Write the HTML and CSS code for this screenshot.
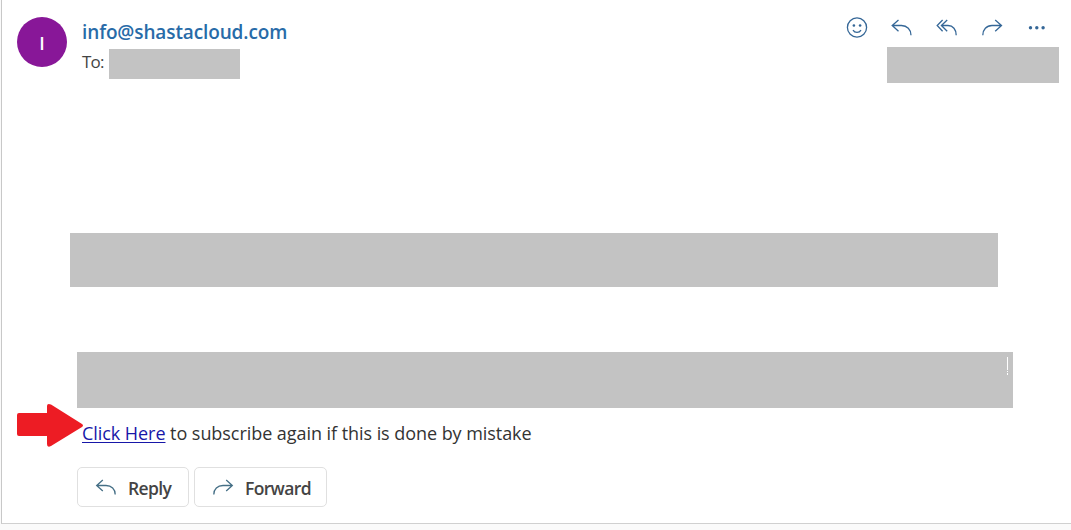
FILE: index.html
```html
<!DOCTYPE html>
<html lang="en">
<head>
  <meta charset="UTF-8" />
  <meta name="viewport" content="width=device-width, initial-scale=1" />
  <title>Mail</title>
  <link rel="stylesheet" href="styles.css">
</head>
<body>

<div class="message">
  <!-- Sender and actions -->
  <header class="header">
    <div class="avatar">I</div>
    <div class="sender">
      <div class="from">info@shastacloud.com</div>
      <div class="to"><span>To:</span><div class="redacted recipient"></div></div>
    </div>
    <div class="side">
      <div class="actions">
        <svg width="22" height="22" viewBox="0 0 22 22">
          <circle cx="11" cy="10.500" r="9.600" />
          <circle class="dot" cx="7.900" cy="8.500" r="1.300" />
          <circle class="dot" cx="14.100" cy="8.500" r="1.300" />
          <path d="M7 13.200C8.800 16.200 13.200 16.200 15 13.200" />
        </svg>
        <svg width="22" height="22" viewBox="0 0 22 22">
          <path d="M7.500 3L1.200 8.500L7.500 14.300M1.200 8.500H10.500C16 8.500 20 12.500 20 18.200" />
        </svg>
        <svg width="22" height="22" viewBox="0 0 22 22">
          <path d="M6.600 3L1.200 8.500L6.600 14.300M11.200 3L5.400 8.500L11.200 14.300M5.400 8.500H12C17 8.500 20.200 12.500 20.200 18.200" />
        </svg>
        <svg width="22" height="22" viewBox="0 0 22 22">
          <path d="M14.200 3L20.500 8.500L14.200 14.300M20.500 8.500H11C5.500 8.500 1.800 12.500 1.800 18.200" />
        </svg>
        <svg width="22" height="22" viewBox="0 0 22 22">
          <circle class="dot" cx="4.500" cy="10.800" r="1.700" />
          <circle class="dot" cx="10.800" cy="10.800" r="1.700" />
          <circle class="dot" cx="17.100" cy="10.800" r="1.700" />
        </svg>
      </div>
      <div class="redacted date"></div>
    </div>
  </header>

  <!-- Body -->
  <div class="redacted intro"></div>
  <div class="redacted details"><span class="caret"></span></div>

  <div class="subscribe">
    <svg class="pointer" width="68" height="46" viewBox="0 0 68 46">
      <path d="M3 10H31V3Q31 0 35 1.500L66 21Q68 22.500 66 24L35 43Q31 45 31 41V33H3Q1 33 1 31V12Q1 10 3 10Z" />
    </svg>
    <p><a href="#">Click Here</a> to subscribe again if this is done by mistake</p>
  </div>

  <!-- Reply buttons -->
  <div class="buttons">
    <button class="reply">
      <svg width="22" height="22" viewBox="0 0 22 22">
        <path d="M7.800 4L1.700 9.500L7.800 15M1.700 9.500H11C16.500 9.500 20.200 13 20.200 18.400" />
      </svg>
      <span>Reply</span>
    </button>
    <button class="forward">
      <svg width="22" height="22" viewBox="0 0 22 22">
        <path d="M14.200 4L20.300 9.500L14.200 15M20.300 9.500H11C5.500 9.500 1.800 13 1.800 18.400" />
      </svg>
      <span>Forward</span>
    </button>
  </div>
</div>

</body>
</html>
```
FILE: styles.css
```css
* {
  box-sizing: border-box;
}
body {
  margin: 0;
  background: #fafafa;
  font-family: "Open Sans", "Noto Sans", sans-serif;
  color: #333;
}
.message {
  height: 524px;
  margin-left: 1px;
  background: #fff;
  border-left: 1px solid #c8c8c8;
  border-bottom: 1px solid #d0d0d0;
}
.header {
  display: flex;
  height: 83px;
  padding: 17px 12px 0 15px;
}
.avatar {
  width: 50px;
  height: 50px;
  border-radius: 50%;
  background: #881798;
  color: #fff;
  font-size: 18px;
  font-weight: 600;
  line-height: 52px;
  text-align: center;
}
.sender {
  margin-left: 15px;
}
.from {
  height: 32px;
  font-size: 19px;
  font-weight: 600;
  line-height: 30px;
  letter-spacing: -0.12px;
  color: #286ba8;
}
.to {
  display: flex;
  height: 30px;
  font-size: 17px;
  line-height: 26px;
  letter-spacing: -0.8px;
  color: #444;
}
.to span {
  width: 27px;
}
.redacted {
  background: #c3c3c3;
}
.recipient {
  width: 131px;
  height: 30px;
}
.side {
  width: 213px;
  margin-left: auto;
}
.actions {
  display: flex;
  gap: 23px;
  height: 30px;
}
svg {
  display: block;
  fill: none;
  stroke: #356797;
  stroke-width: 1.3;
}
svg .dot {
  fill: #356797;
  stroke: none;
}
.date {
  width: 172px;
  height: 36px;
  margin-left: 41px;
}
.intro {
  width: 928px;
  height: 54px;
  margin: 150px 0 0 68px;
}
.details {
  width: 936px;
  height: 56px;
  margin: 65px 0 0 75px;
  padding: 5px 5px 0 0;
}
.caret {
  display: block;
  width: 1px;
  height: 18px;
  margin-left: auto;
  background: linear-gradient(#fff 13px, #c3c3c3 13px 14px, #fff 14px 15px, #c3c3c3 15px 16px, #fff 16px);
}
.subscribe {
  position: relative;
  height: 59px;
  padding: 12px 0 0 80px;
}
.pointer {
  position: absolute;
  left: 14px;
  top: -5px;
  fill: #ed1c24;
  stroke: none;
}
.subscribe p {
  margin: 0;
  font-size: 18px;
  line-height: 26px;
  letter-spacing: -0.055px;
  white-space: nowrap;
}
.subscribe a {
  color: #1717a8;
  text-decoration-thickness: 1px;
  text-underline-offset: 2px;
}
.buttons {
  display: flex;
  gap: 5px;
  padding-left: 75px;
}
.buttons button {
  display: flex;
  align-items: center;
  gap: 11px;
  height: 40px;
  padding: 0 0 0 17px;
  background: #fff;
  border: 1px solid #e0e0e0;
  border-radius: 5px;
  font: 600 17.5px "Open Sans", "Noto Sans", sans-serif;
  letter-spacing: -0.65px;
  color: #444;
}
.buttons span {
  padding-top: 2px;
}
.buttons .reply {
  width: 112px;
}
.buttons .forward {
  width: 133px;
}
.buttons svg {
  stroke: #456f86;
}
```
